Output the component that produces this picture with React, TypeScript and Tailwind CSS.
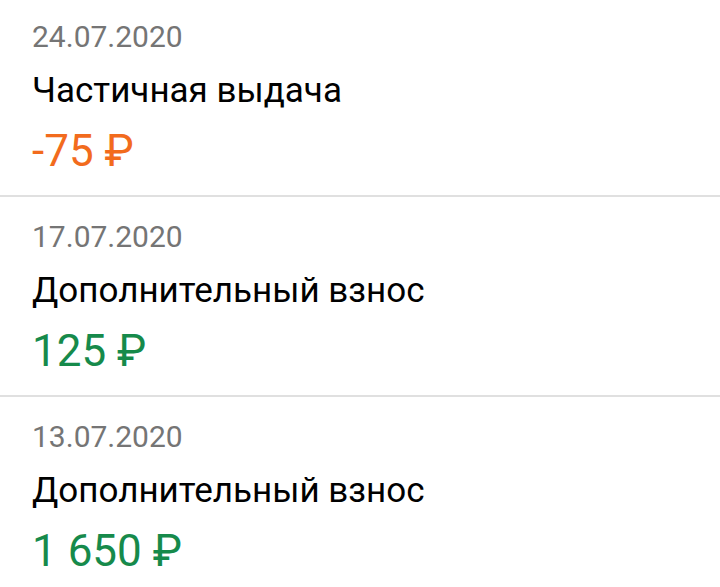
import React from 'react';

interface Operation {
  date: string;
  title: string;
  amount: string;
  negative: boolean;
}

const operations: Operation[] = [
  { date: '24.07.2020', title: 'Частичная выдача', amount: '-75 ₽', negative: true },
  { date: '17.07.2020', title: 'Дополнительный взнос', amount: '125 ₽', negative: false },
  { date: '13.07.2020', title: 'Дополнительный взнос', amount: '1 650 ₽', negative: false },
];

export default function App() {
  return (
    <div className="w-[720px] h-[587px] overflow-hidden bg-white font-['Roboto',sans-serif]">
      {operations.map((op, i) => (
        <div
          key={op.date}
          className={`px-8 pb-4 border-b-2 border-[#e0e0e0] ${i === 0 ? 'pt-[19px]' : 'pt-[22px]'}`}
        >
          <div className="text-[30px] leading-[36px] text-[#757575]">{op.date}</div>
          <div className="mt-[14px] text-[35px] leading-[44px] text-black">{op.title}</div>
          <div
            className={`mt-[10px] text-[44px] leading-[56px] ${
              op.negative ? 'text-[#f26b1d]' : 'text-[#168a4b]'
            }`}
          >
            {op.amount}
          </div>
        </div>
      ))}
    </div>
  );
}
